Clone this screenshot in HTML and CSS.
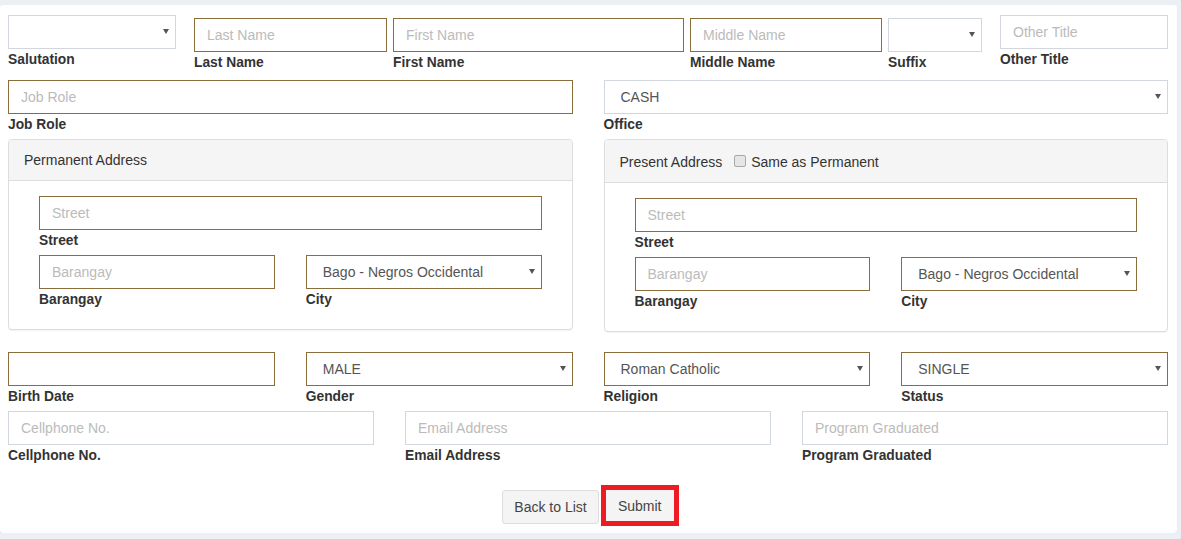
FILE: index.html
```html
<!DOCTYPE html>
<html lang="en">
<head>
<meta charset="utf-8">
<title>Employee Form</title>
<link rel="stylesheet" href="styles.css">
</head>
<body>
<div class="card">
  <form class="form">
    <div class="row row-name">
      <div class="field w-sal">
        <div class="select"><select class="control"><option></option></select></div>
        <label class="label">Salutation</label>
      </div>
      <div class="field w-last low">
        <input class="control warn" placeholder="Last Name">
        <label class="label">Last Name</label>
      </div>
      <div class="field w-first low">
        <input class="control warn" placeholder="First Name">
        <label class="label">First Name</label>
      </div>
      <div class="field w-middle low">
        <input class="control warn" placeholder="Middle Name">
        <label class="label">Middle Name</label>
      </div>
      <div class="field w-suffix low">
        <div class="select"><select class="control"><option></option></select></div>
        <label class="label">Suffix</label>
      </div>
      <div class="field w-other">
        <input class="control" placeholder="Other Title">
        <label class="label">Other Title</label>
      </div>
    </div>

    <div class="grid grid-2 row-job">
      <div class="field">
        <input class="control warn" placeholder="Job Role">
        <label class="label">Job Role</label>
      </div>
      <div class="field">
        <div class="select"><select class="control"><option>CASH</option></select></div>
        <label class="label">Office</label>
      </div>
    </div>

    <div class="grid grid-2 row-panels">
      <div class="panel">
        <div class="panel-heading">Permanent Address</div>
        <div class="panel-body">
          <div class="field spaced">
            <input class="control warn" placeholder="Street">
            <label class="label">Street</label>
          </div>
          <div class="grid grid-2">
            <div class="field spaced">
              <input class="control warn" placeholder="Barangay">
              <label class="label">Barangay</label>
            </div>
            <div class="field spaced">
              <div class="select"><select class="control warn"><option>Bago - Negros Occidental</option></select></div>
              <label class="label">City</label>
            </div>
          </div>
        </div>
      </div>
      <div class="panel">
        <div class="panel-heading tall">Present Address <label class="check"><input type="checkbox" class="checkbox">Same as Permanent</label></div>
        <div class="panel-body">
          <div class="field spaced">
            <input class="control warn" placeholder="Street">
            <label class="label">Street</label>
          </div>
          <div class="grid grid-2">
            <div class="field spaced">
              <input class="control warn" placeholder="Barangay">
              <label class="label">Barangay</label>
            </div>
            <div class="field spaced">
              <div class="select"><select class="control warn"><option>Bago - Negros Occidental</option></select></div>
              <label class="label">City</label>
            </div>
          </div>
        </div>
      </div>
    </div>

    <div class="grid grid-4 row-personal">
      <div class="field">
        <input class="control warn">
        <label class="label">Birth Date</label>
      </div>
      <div class="field">
        <div class="select"><select class="control warn"><option>MALE</option></select></div>
        <label class="label">Gender</label>
      </div>
      <div class="field">
        <div class="select"><select class="control warn"><option>Roman Catholic</option></select></div>
        <label class="label">Religion</label>
      </div>
      <div class="field">
        <div class="select"><select class="control warn"><option>SINGLE</option></select></div>
        <label class="label">Status</label>
      </div>
    </div>

    <div class="grid grid-3 row-contact">
      <div class="field">
        <input class="control" placeholder="Cellphone No.">
        <label class="label">Cellphone No.</label>
      </div>
      <div class="field">
        <input class="control" placeholder="Email Address">
        <label class="label">Email Address</label>
      </div>
      <div class="field">
        <input class="control" placeholder="Program Graduated">
        <label class="label">Program Graduated</label>
      </div>
    </div>

    <div class="actions">
      <button type="button" class="btn">Back to List</button>
      <button type="button" class="btn btn-submit">Submit</button>
    </div>
  </form>
</div>
</body>
</html>
```

FILE: styles.css
```css
html, body {
  margin: 0;
  padding: 0;
}
body {
  background: #ecf0f5;
  font-family: "Liberation Sans", Arial, sans-serif;
  font-size: 14px;
  color: #333;
  overflow: hidden;
}
.card {
  margin-top: 5px;
  width: 1177px;
  height: 528px;
  background: #fff;
  border-radius: 3px;
  box-shadow: 0 1px 1px rgba(0, 0, 0, 0.1);
  box-sizing: border-box;
  padding: 10px 0 0 8px;
}
.form {
  width: 1160px;
}
.row {
  display: flex;
  align-items: flex-start;
}
.grid {
  display: grid;
  column-gap: 31px;
  align-items: start;
}
.grid-2 { grid-template-columns: 1fr 1fr; }
.grid-3 { grid-template-columns: 1fr 1fr 1fr; }
.grid-4 { grid-template-columns: 1fr 1fr 1fr 1fr; }

.field {
  display: flex;
  flex-direction: column;
  min-width: 0;
}
.field.spaced .label {
  margin-bottom: 3px;
}
.low { margin-top: 3px; }
.w-sal { width: 168px; }
.w-last { width: 193px; margin-left: 18px; }
.w-first { width: 291px; margin-left: 6px; }
.w-middle { width: 192px; margin-left: 6px; }
.w-suffix { width: 94px; margin-left: 6px; }
.w-other { width: 168px; margin-left: 18px; }

.control {
  display: block;
  width: 100%;
  height: 34px;
  box-sizing: border-box;
  margin: 0;
  border: 1px solid #d2d6de;
  border-radius: 0;
  padding: 0 12px;
  background: #fff;
  font-family: inherit;
  font-size: 14px;
  color: #555;
  outline: none;
}
.control.warn {
  border-color: #8a6d3b;
}
.control::placeholder {
  color: #bbb;
}
.select {
  position: relative;
}
.select .control {
  appearance: none;
  -webkit-appearance: none;
  padding-left: 16px;
  padding-right: 20px;
}
.select::after {
  content: "";
  position: absolute;
  right: 7px;
  top: 14px;
  border-left: 3px solid transparent;
  border-right: 3px solid transparent;
  border-top: 5px solid #555;
  pointer-events: none;
}
.label {
  display: block;
  font-weight: bold;
  line-height: 22px;
  margin-bottom: -2px;
  font-size: 13.8px;
  color: #333;
}

.row-job { margin-top: 8px; }
.row-panels { margin-top: 5px; }
.row-personal { margin-top: 20px; }
.row-contact { margin-top: 5px; }

.panel {
  border: 1px solid #ddd;
  border-radius: 4px;
  box-shadow: 0 1px 1px rgba(0, 0, 0, 0.05);
  background: #fff;
}
.panel-heading {
  background: #f5f5f5;
  border-bottom: 1px solid #ddd;
  border-radius: 3px 3px 0 0;
  padding: 10px 15px;
  line-height: 20px;
  color: #333;
}
.panel-heading.tall {
  padding: 12px 15px 10px;
}
.check {
  margin-left: 8px;
  display: inline-flex;
  align-items: center;
}
.checkbox {
  appearance: none;
  -webkit-appearance: none;
  width: 12px;
  height: 12px;
  margin: 0 5px 2px 0;
  box-sizing: border-box;
  background: #e6e6e6;
  border: 1px solid #a9a9a9;
  border-radius: 2px;
}
.panel-body {
  padding: 15px 30px 15px;
}

.actions {
  margin-top: 20px;
  display: flex;
  justify-content: center;
  align-items: flex-start;
  padding-left: 5px;
}
.btn {
  margin-top: 5px;
  height: 34px;
  padding: 0 11px;
  background: #f4f4f4;
  border: 1px solid #ddd;
  border-radius: 3px;
  color: #444;
  font-family: inherit;
  font-size: 14px;
}
.btn-submit {
  margin-top: 0;
  margin-left: 2px;
  width: 78px;
  height: 41px;
  padding: 0;
  border: 5px solid #ed1c24;
  border-radius: 0;
}
```
